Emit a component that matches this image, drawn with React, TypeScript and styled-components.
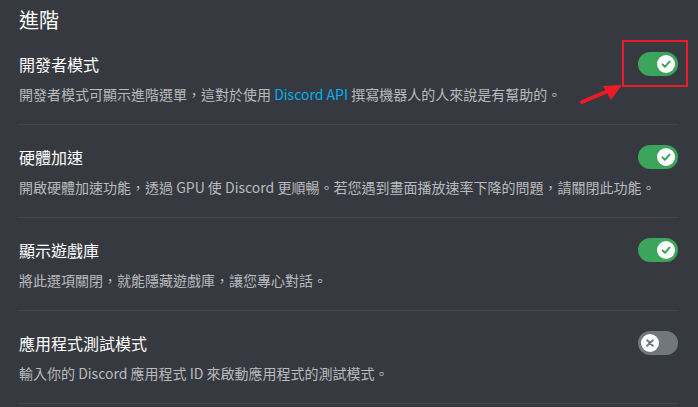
import React from "react";
import styled, { createGlobalStyle } from "styled-components";

const GlobalStyle = createGlobalStyle`
  html, body {
    margin: 0;
    padding: 0;
    background: #36393f;
  }
  body {
    font-family: "Noto Sans CJK TC", "Noto Sans", sans-serif;
  }
`;

const Page = styled.div`
  position: relative;
  width: 698px;
  height: 407px;
  overflow: hidden;
  background: #36393f;
  padding: 8px 20px 0 18px;
  box-sizing: border-box;
`;

const Heading = styled.h2`
  margin: 0 0 20px 1px;
  font-size: 20px;
  line-height: 24px;
  font-weight: 400;
  color: #ffffff;
`;

const Row = styled.div<{ $first?: boolean }>`
  padding: ${(p) => (p.$first ? "0" : "20px")} 0 20px 0;
  border-bottom: 1px solid #43464c;
`;

const RowHead = styled.div`
  display: flex;
  align-items: center;
  justify-content: space-between;
  height: 24px;
`;

const Title = styled.div`
  font-size: 16px;
  line-height: 20px;
  font-weight: 400;
  color: #ffffff;
  padding-left: 1px;
`;

const Desc = styled.div`
  margin-top: 8px;
  font-size: 14px;
  line-height: 20px;
  color: #b9bbbe;
  padding-left: 1px;
`;

const Link = styled.span`
  color: #00aff4;
`;

const Track = styled.div<{ $on: boolean }>`
  display: flex;
  align-items: center;
  justify-content: ${(p) => (p.$on ? "flex-end" : "flex-start")};
  width: 40px;
  height: 24px;
  padding: 3px;
  box-sizing: border-box;
  border-radius: 12px;
  background: ${(p) => (p.$on ? "#3ba55c" : "#72767d")};
  flex-shrink: 0;
`;

const Knob = styled.div`
  width: 18px;
  height: 18px;
  border-radius: 50%;
  background: #ffffff;
  display: flex;
  align-items: center;
  justify-content: center;
`;

const Callout = styled.div`
  position: absolute;
  left: 622px;
  top: 40px;
  width: 66px;
  height: 47px;
  border: 2px solid #ec1c24;
  box-sizing: border-box;
`;

const Arrow = styled.svg`
  position: absolute;
  left: 578px;
  top: 80px;
`;

function Toggle({ on }: { on: boolean }) {
  return (
    <Track $on={on}>
      <Knob>
        {on ? (
          <svg width="14" height="14" viewBox="0 0 20 20">
            <path
              d="M5 10.5 L8.5 14 L15 6.5"
              fill="none"
              stroke="#3ba55c"
              strokeWidth="2.8"
              strokeLinecap="round"
              strokeLinejoin="round"
            />
          </svg>
        ) : (
          <svg width="14" height="14" viewBox="0 0 20 20">
            <path
              d="M6 6 L14 14 M14 6 L6 14"
              fill="none"
              stroke="#72767d"
              strokeWidth="2.8"
              strokeLinecap="round"
            />
          </svg>
        )}
      </Knob>
    </Track>
  );
}

const settings = [
  {
    title: "開發者模式",
    on: true,
    desc: (
      <>
        開發者模式可顯示進階選單，這對於使用 <Link>Discord API</Link>{" "}
        撰寫機器人的人來說是有幫助的。
      </>
    ),
  },
  {
    title: "硬體加速",
    on: true,
    desc: "開啟硬體加速功能，透過 GPU 使 Discord 更順暢。若您遇到畫面播放速率下降的問題，請關閉此功能。",
  },
  {
    title: "顯示遊戲庫",
    on: true,
    desc: "將此選項關閉，就能隱藏遊戲庫，讓您專心對話。",
  },
  {
    title: "應用程式測試模式",
    on: false,
    desc: "輸入你的 Discord 應用程式 ID 來啟動應用程式的測試模式。",
  },
];

export default function App() {
  return (
    <>
      <GlobalStyle />
      <Page>
        <Heading>進階</Heading>
        {settings.map((s, i) => (
          <Row key={s.title} $first={i === 0}>
            <RowHead>
              <Title>{s.title}</Title>
              <Toggle on={s.on} />
            </RowHead>
            <Desc>{s.desc}</Desc>
          </Row>
        ))}
        {/* red annotation drawn over the screenshot */}
        <Callout />
        <Arrow width="50" height="30" viewBox="0 0 50 30">
          <line x1="4" y1="22" x2="30" y2="11" stroke="#ec1c24" strokeWidth="4" strokeLinecap="round" />
          <polygon points="44,5 25,6 33,20" fill="#ec1c24" />
        </Arrow>
      </Page>
    </>
  );
}
